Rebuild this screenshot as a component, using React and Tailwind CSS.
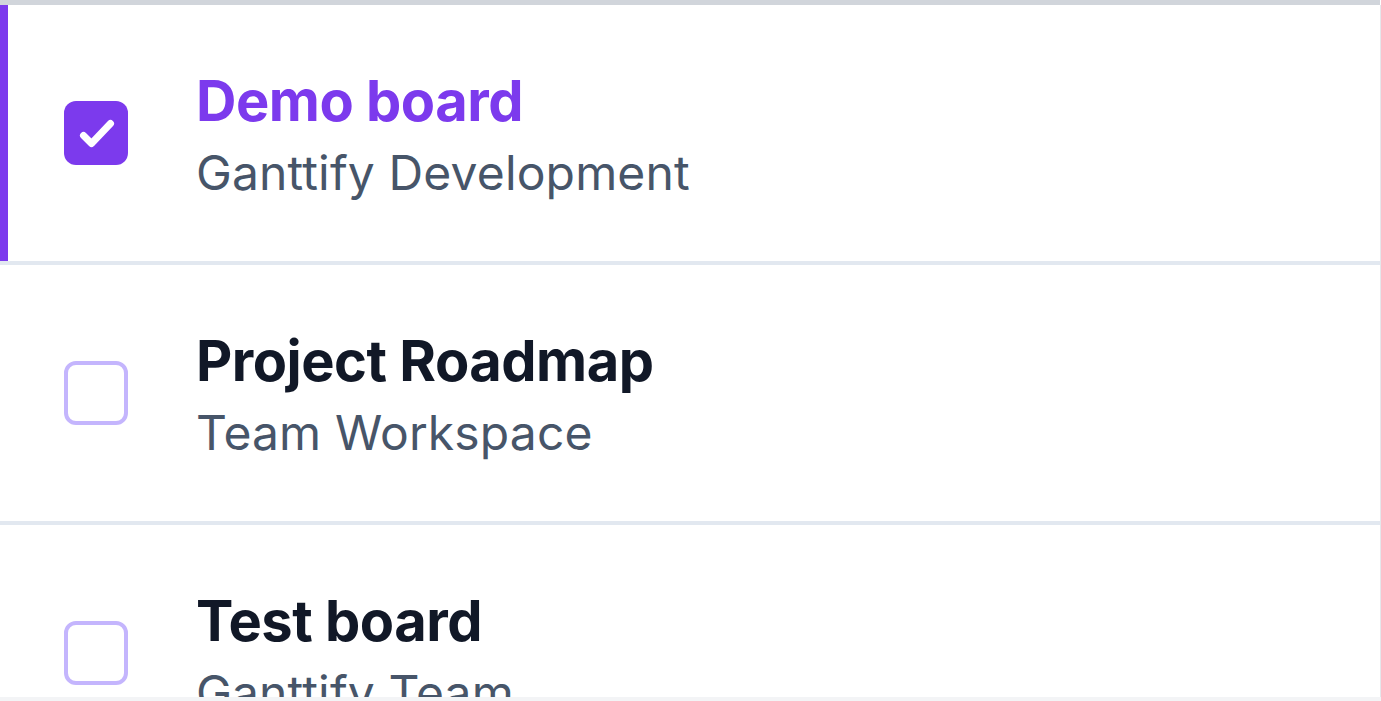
import React from "react";

const boards = [
  { title: "Demo board", subtitle: "Ganttify Development", selected: true },
  { title: "Project Roadmap", subtitle: "Team Workspace", selected: false },
  { title: "Test board", subtitle: "Ganttify Team", selected: false },
];

function CheckBox({ checked }) {
  if (checked) {
    return (
      <div className="w-16 h-16 shrink-0 rounded-[12px] bg-[#7c3aed] flex items-center justify-center">
        <svg width="64" height="64" viewBox="0 0 64 64" fill="none">
          <path
            d="M19.5 34.5 L27.5 42.5 L46.5 22.5"
            stroke="white"
            strokeWidth="7"
            strokeLinecap="round"
            strokeLinejoin="round"
          />
        </svg>
      </div>
    );
  }
  return (
    <div className="w-16 h-16 shrink-0 rounded-[12px] border-4 border-[#c4b5fd] bg-white" />
  );
}

function Row({ title, subtitle, selected }) {
  return (
    <div className="flex h-[260px] shrink-0 border-b-4 border-[#e2e8f0]">
      {selected && <div className="w-2 shrink-0 bg-[#7c3aed]" />}
      <div className={`flex flex-1 items-center gap-[68px] ${selected ? "pl-14" : "pl-16"}`}>
        <CheckBox checked={selected} />
        <div className="flex flex-col">
          <div
            className={`text-[56px] leading-[80px] font-bold tracking-[-0.5px] ${
              selected ? "text-[#7c3aed]" : "text-[#111827]"
            }`}
          >
            {title}
          </div>
          <div className="text-[48px] leading-[64px] tracking-[0.15px] text-[#475569]">{subtitle}</div>
        </div>
      </div>
    </div>
  );
}

export default function App() {
  return (
    <div className="w-[1381px] h-[701px] flex flex-col bg-white overflow-hidden font-['Inter','Noto_Sans',sans-serif]">
      <div className="h-[5px] shrink-0 bg-[#d1d5db] mr-px" />
      <div className="flex-1 min-h-0 overflow-hidden flex flex-col border-r border-[#e5e7eb]">
        {boards.map((b) => (
          <Row key={b.title} {...b} />
        ))}
      </div>
      <div className="h-1 shrink-0 bg-[#f3f4f6]" />
    </div>
  );
}
